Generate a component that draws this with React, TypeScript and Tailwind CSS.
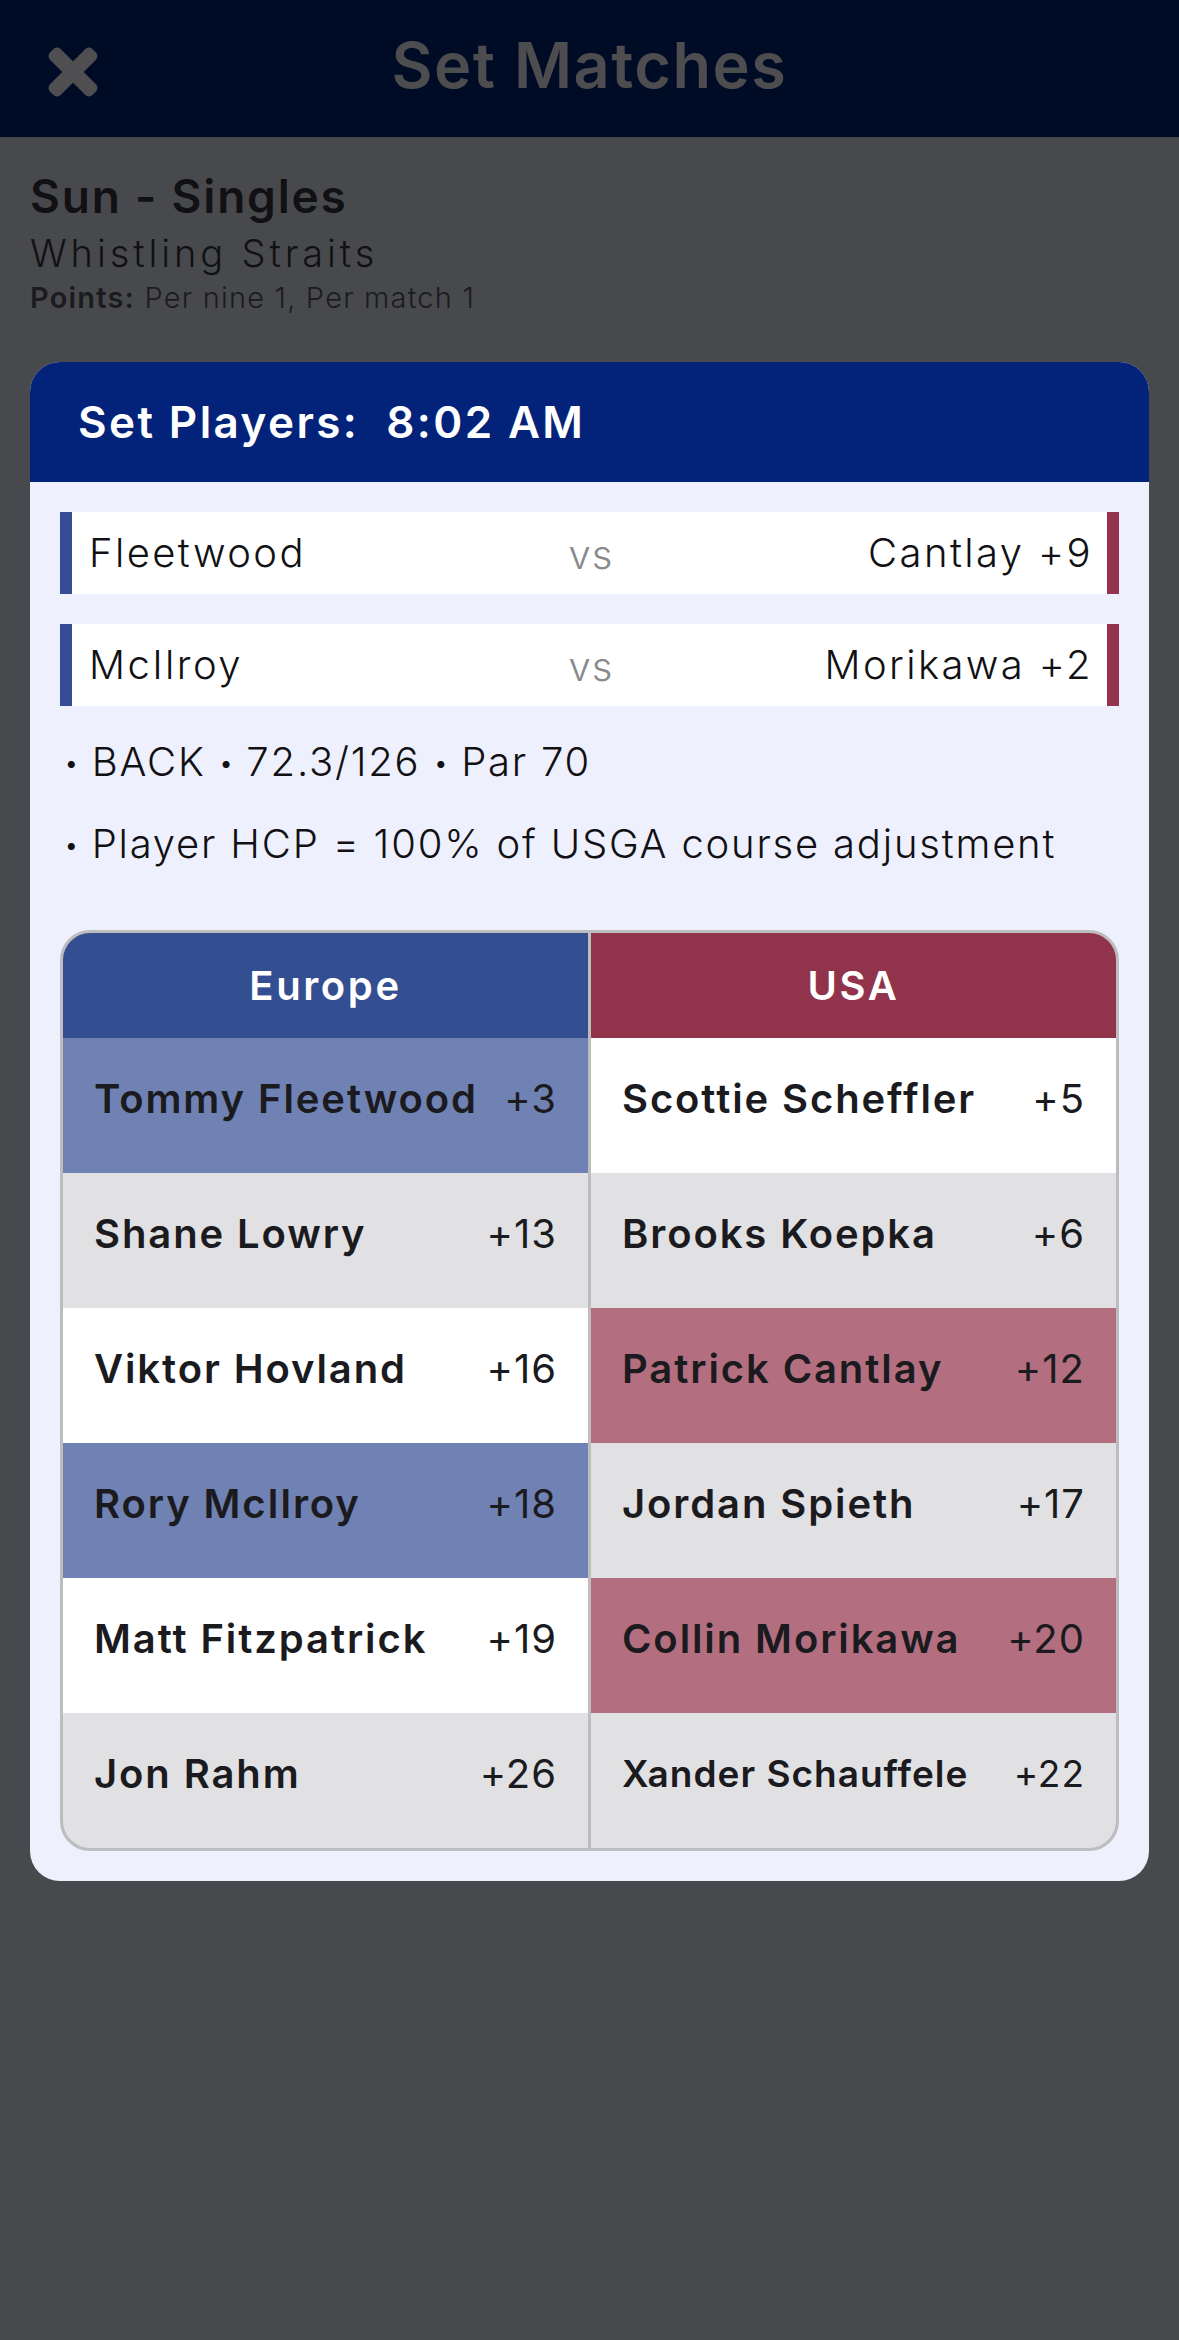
import React from 'react';

type Cell = { name: string; hcp: string; tone: 'hi' | 'gray' | 'white'; small?: boolean };

const europe: Cell[] = [
  { name: 'Tommy Fleetwood', hcp: '+3', tone: 'hi' },
  { name: 'Shane Lowry', hcp: '+13', tone: 'gray' },
  { name: 'Viktor Hovland', hcp: '+16', tone: 'white' },
  { name: 'Rory McIlroy', hcp: '+18', tone: 'hi' },
  { name: 'Matt Fitzpatrick', hcp: '+19', tone: 'white' },
  { name: 'Jon Rahm', hcp: '+26', tone: 'gray' },
];

const usa: Cell[] = [
  { name: 'Scottie Scheffler', hcp: '+5', tone: 'white' },
  { name: 'Brooks Koepka', hcp: '+6', tone: 'gray' },
  { name: 'Patrick Cantlay', hcp: '+12', tone: 'hi' },
  { name: 'Jordan Spieth', hcp: '+17', tone: 'gray' },
  { name: 'Collin Morikawa', hcp: '+20', tone: 'hi' },
  { name: 'Xander Schauffele', hcp: '+22', tone: 'gray', small: true },
];

const matches = [
  { left: 'Fleetwood', right: 'Cantlay +9' },
  { left: 'McIlroy', right: 'Morikawa +2' },
];

function CloseIcon() {
  return (
    <svg width="54" height="54" viewBox="0 0 54 54">
      <g transform="translate(27 27)" fill="#4f4f51">
        <rect x="-30" y="-7.5" width="60" height="15" rx="5" transform="rotate(45)" />
        <rect x="-30" y="-7.5" width="60" height="15" rx="5" transform="rotate(-45)" />
      </g>
    </svg>
  );
}

function Dot() {
  return <span className="text-[26px] leading-none align-[4px] tracking-normal">•</span>;
}

function PlayerCell({ cell, team }: { cell: Cell; team: 'eu' | 'us' }) {
  const bg =
    cell.tone === 'gray'
      ? 'bg-[#e1e1e3]'
      : cell.tone === 'white'
      ? 'bg-white'
      : team === 'eu'
      ? 'bg-[#6f82b3]'
      : 'bg-[#b36f80]';
  return (
    <div className={`${bg} h-[135px] flex items-center justify-between pl-[31px] pr-[31px] pb-[14px] text-[#1b1b1f]`}>
      <span className={cell.small ? 'text-[37px] font-semibold tracking-[1px]' : 'text-[40px] font-semibold tracking-[1.9px]'}>{cell.name}</span>
      <span className={cell.small ? 'text-[37px] font-normal tracking-[1px]' : 'text-[40px] font-normal tracking-[1px]'}>{cell.hcp}</span>
    </div>
  );
}

export default function App() {
  return (
    <div className="min-h-[2340px] w-[1179px] bg-[#48494d] font-['Inter',sans-serif]">
      <header className="h-[137px] bg-[#000c26] grid grid-cols-[1fr_auto_1fr] items-start">
        <div className="pl-[46px] pt-[45px]">
          <CloseIcon />
        </div>
        <h1 className="pt-[30px] text-[63px] leading-[70px] font-semibold tracking-[1.5px] text-[#4d4d4f]">Set Matches</h1>
        <div />
      </header>

      <div className="px-[30px] pt-[31px] text-[#111114]">
        <h2 className="text-[46px] leading-[56px] font-semibold tracking-[1.8px]">Sun - Singles</h2>
        <p className="text-[38px] leading-[58px] font-light tracking-[3.9px]">Whistling Straits</p>
        <p className="text-[29px] leading-[31px] font-light tracking-[1.2px] text-[#1b1b1d]">
          <span className="font-semibold">Points:</span> Per nine 1, Per match 1
        </p>

        <div className="mt-[49px] rounded-[30px] overflow-hidden bg-[#eef0fd]">
          <div className="h-[120px] bg-[#03237a] flex items-center pl-[48px]">
            <span className="text-[44px] font-semibold tracking-[2.4px] text-white">Set Players:&nbsp; 8:02 AM</span>
          </div>

          <div className="px-[30px] pt-[30px] pb-[30px]">
            <div className="flex flex-col gap-[30px]">
              {matches.map(m => (
                <div
                  key={m.left}
                  className="h-[82px] bg-white border-l-[12px] border-r-[12px] border-l-[#354d94] border-r-[#93334d] grid grid-cols-[1fr_auto_1fr] items-center pl-[17px] pr-[14px] text-[40px] font-light tracking-[2.4px] text-[#111114]"
                >
                  <span>{m.left}</span>
                  <span className="text-[#8a8a8c] pt-[4px] tracking-[1px]">vs</span>
                  <span className="text-right">{m.right}</span>
                </div>
              ))}
            </div>

            <div className="mt-[15px] pl-[4px] text-[40px] leading-[82px] font-light tracking-[1.8px] text-[#111114]">
              <p className="h-[82px]">
                <Dot /> BACK <Dot /> 72.3/126 <Dot /> Par 70
              </p>
              <p className="h-[82px]">
                <Dot /> Player HCP = 100% of USGA course adjustment
              </p>
            </div>

            <div className="mt-[45px] border-[3px] border-[#bdbdc0] rounded-[30px] overflow-hidden bg-[#bdbdc0] grid grid-cols-2 gap-x-[3px]">
              <div className="h-[105px] bg-[#344e92] flex items-center justify-center text-[40px] font-semibold tracking-[2.6px] text-white">Europe</div>
              <div className="h-[105px] bg-[#92334c] flex items-center justify-center text-[40px] font-semibold tracking-[2.6px] text-white">USA</div>
              {europe.map((e, i) => (
                <React.Fragment key={e.name}>
                  <PlayerCell cell={e} team="eu" />
                  <PlayerCell cell={usa[i]} team="us" />
                </React.Fragment>
              ))}
            </div>
          </div>
        </div>
      </div>
    </div>
  );
}
